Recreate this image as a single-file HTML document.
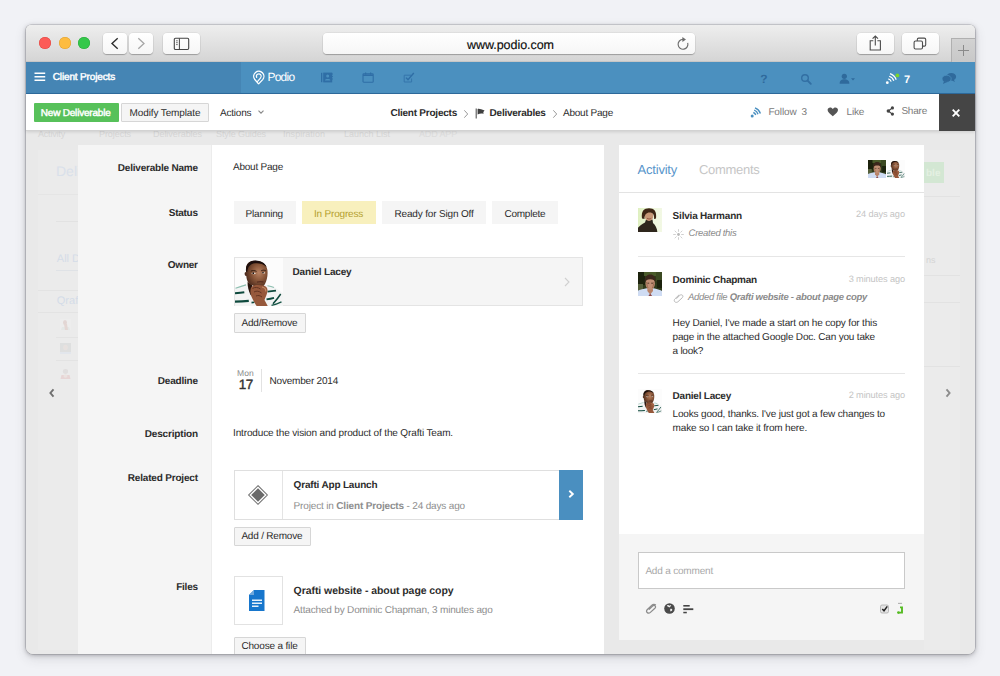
<!DOCTYPE html>
<html lang="en">
<head>
<meta charset="utf-8">
<title>Podio - About Page</title>
<style>
*{box-sizing:border-box;margin:0;padding:0}
html,body{width:1000px;height:676px;overflow:hidden}
body{background:#f1f2f6;font-family:"Liberation Sans",Arial,Helvetica,sans-serif;font-size:10px;color:#333;position:relative;text-rendering:geometricPrecision}
.a{position:absolute}
.t{position:absolute;white-space:nowrap;line-height:1}
#win{left:26px;top:25px;width:949px;height:629px;border-radius:5px 5px 7px 7px;background:#e9e9e9;box-shadow:0 0 0 .6px rgba(40,40,48,.26),0 1px 4px rgba(52,52,62,.36),0 4px 12px rgba(52,52,62,.15);}
#clip{left:26px;top:25px;width:949px;height:629px;border-radius:5px 5px 7px 7px;overflow:hidden}
#clip > .in{position:absolute;left:-26px;top:-25px;width:1000px;height:676px}
#chrome{left:26px;top:25px;width:949px;height:37px;background:linear-gradient(#eeeeee,#d5d5d5);border-bottom:1px solid #c6c6c6}
.tl{width:12px;height:12px;border-radius:50%;top:37px}
.cb{background:linear-gradient(#ffffff,#f6f6f6);border-radius:4px;box-shadow:0 1px 1px rgba(0,0,0,.25),0 0 0 .5px rgba(0,0,0,.08);top:33px;height:21px}
#blue{left:26px;top:62px;width:949px;height:32px;background:#4b90bf;border-bottom:1px solid #2e6c9e}
#blueL{left:26px;top:62px;width:215px;height:31px;background:#4585b4}
#wbar{left:26px;top:94px;width:949px;height:37px;background:#fff;border-bottom:1px solid #d2d2d2;box-shadow:0 1px 3px rgba(0,0,0,.12)}
.btn{background:#f5f5f5;border:1px solid #d6d6d6;border-radius:1px}
.sbtn{background:#f5f5f5;top:201px;height:23px}
</style>
</head>
<body>
<div class="a" id="win"></div>
<div class="a" id="clip"><div class="in">

<!-- page behind overlay (faint) -->
<div class="a" style="left:26px;top:131px;width:949px;height:523px;background:#e9e9e9"></div>
<div class="a" style="left:38px;top:150px;width:40px;height:500px;background:#ebebeb"></div>
<div class="a" style="left:38px;top:194px;width:40px;height:1px;background:#e5e5e5"></div>
<div class="a" style="left:56px;top:221px;width:22px;height:1px;background:#e2e2e2"></div>
<div class="a" style="left:56px;top:270px;width:22px;height:1px;background:#dfe2e6"></div>
<div class="a" style="left:38px;top:290px;width:40px;height:1px;background:#e3e3e3"></div>
<div class="a" style="left:38px;top:312px;width:40px;height:1px;background:#e3e3e3"></div>
<div class="a" style="left:56px;top:337px;width:22px;height:1px;background:#e3e3e3"></div>
<div class="a" style="left:56px;top:360px;width:22px;height:1px;background:#e3e3e3"></div>
<svg class="a" style="left:59px;top:318px;opacity:.55" width="13" height="13" viewBox="0 0 13 13"><defs><filter id="fb1"><feGaussianBlur stdDeviation=".7"/></filter></defs><g filter="url(#fb1)"><rect x="1" y="1" width="11" height="11" fill="#efefef"/><ellipse cx="6" cy="4.500" rx="2" ry="2.600" fill="#dcc6c2"/><path d="M2 12 L3 9 L10 9 L11 12Z" fill="#dfe6e4"/><path d="M5 6 L8 6 L9 12 L6 12Z" fill="#e0c8c2"/></g></svg>
<svg class="a" style="left:59px;top:342px;opacity:.6" width="13" height="13" viewBox="0 0 13 13"><g filter="url(#fb1)"><rect x="1" y="1" width="11" height="11" fill="#d6d8d8"/><ellipse cx="6.500" cy="5.500" rx="2.300" ry="2.800" fill="#e6dcd8"/><path d="M1 12 L1 10 L12 10 L12 12Z" fill="#dde3ee"/></g></svg>
<svg class="a" style="left:59px;top:367px;opacity:.55" width="13" height="13" viewBox="0 0 13 13"><g filter="url(#fb1)"><rect x="1" y="1" width="11" height="11" fill="#ececec"/><ellipse cx="6.500" cy="4.500" rx="2.600" ry="2.400" fill="#d8d4d4"/><path d="M1.500 12 L2.500 8 L10.500 8 L11.500 12Z" fill="#e4c4c4"/><ellipse cx="6.500" cy="9" rx="2" ry="1.800" fill="#eadcd8"/></g></svg>
<div class="a" style="left:924px;top:150px;width:36px;height:500px;background:#ebebeb"></div>
<div class="a" style="left:924px;top:162px;width:20px;height:21px;background:#d3e7d3"></div>
<div class="a" style="left:924px;top:196px;width:36px;height:1px;background:#e2e2e2"></div>
<div class="a" style="left:924px;top:275px;width:36px;height:1px;background:#e2e2e2"></div>
<div class="a" style="left:924px;top:302px;width:36px;height:1px;background:#e2e2e2"></div>
<div class="a" style="left:924px;top:366px;width:36px;height:1px;background:#e2e2e2"></div>
<div class="t" id="f1" style="left:38.0px;top:130.00px;font-size:9px;color:#d6d6d6;letter-spacing:-0.189px">Activity</div>
<div class="t" id="f2" style="left:99.0px;top:130.00px;font-size:9px;color:#d6d6d6;letter-spacing:-0.064px">Projects</div>
<div class="t" id="f3" style="left:153.0px;top:130.00px;font-size:9px;color:#d6d6d6;letter-spacing:-0.044px">Deliverables</div>
<div class="t" id="f4" style="left:216.0px;top:130.00px;font-size:9px;color:#d6d6d6;letter-spacing:-0.086px">Style Guides</div>
<div class="t" id="f5" style="left:283.0px;top:130.00px;font-size:9px;color:#d6d6d6;letter-spacing:0.043px">Inspiration</div>
<div class="t" id="f6" style="left:344.0px;top:130.00px;font-size:9px;color:#d6d6d6;letter-spacing:-0.004px">Launch List</div>
<div class="t" id="f7" style="left:419.0px;top:130.00px;font-size:9px;color:#dcdcdc;letter-spacing:-0.145px">ADD APP</div>
<div class="t" id="fd" style="left:56.0px;top:164.00px;font-size:14px;color:#d9e0ea">Deli</div>
<div class="t" id="fa" style="left:56.8px;top:254.00px;font-size:11px;color:#d4dce8">All De</div>
<div class="t" id="fq" style="left:56.8px;top:296.00px;font-size:11px;color:#d4dce8">Qraft</div>
<div class="t" id="fb" style="left:926.0px;top:169.00px;font-size:10px;color:#e4f0e2;font-weight:bold">ble</div>
<div class="t" id="fns" style="left:926.0px;top:256.00px;font-size:9px;color:#d4d4d4">ns</div>
<!-- side chevrons -->
<svg class="a" style="left:47px;top:386px" width="10" height="14" viewBox="0 0 10 14"><path d="M6.500 3.400 L3.400 7 L6.500 10.600" fill="none" stroke="#707070" stroke-width="1.900"/></svg>
<svg class="a" style="left:943px;top:386px" width="10" height="14" viewBox="0 0 10 14"><path d="M3.500 3.400 L6.600 7 L3.500 10.600" fill="none" stroke="#8c8c8c" stroke-width="1.900"/></svg>

<!-- main modal -->
<div class="a" style="left:78px;top:145px;width:134px;height:520px;background:#f5f5f5;border-right:1px solid #ececec"></div>
<div class="a" style="left:212px;top:145px;width:392px;height:520px;background:#fff"></div>

<!-- status buttons -->
<div class="a sbtn" style="left:234px;width:62px"></div>
<div class="a sbtn" style="left:302px;width:74px;background:#f8f0bd"></div>
<div class="a sbtn" style="left:382px;width:104px"></div>
<div class="a sbtn" style="left:492px;width:66px"></div>

<!-- owner -->
<div class="a" style="left:234px;top:257px;width:349px;height:49px;background:#f5f5f5;border:1px solid #e4e4e4"></div>
<svg class="a" style="left:234.5px;top:257.5px" width="48" height="48" viewBox="0 0 48 48">
<defs><filter id="bld3" x="-10%" y="-10%" width="120%" height="120%"><feGaussianBlur stdDeviation="0.55"/></filter>
<radialGradient id="fgd3" cx="0.62" cy="0.45" r="0.65"><stop offset="0" stop-color="#b98363"/><stop offset="0.45" stop-color="#8a573a"/><stop offset="1" stop-color="#402216"/></radialGradient>
<clipPath id="avcd3"><rect width="48" height="48"/></clipPath></defs>
<rect width="48" height="48" fill="#fcfcfc"/>
<g filter="url(#bld3)" clip-path="url(#avcd3)">
<path d="M-1 31 C4 28 9 26.500 14 26 L33 27 C38 28 43 31 49 36 L49 49 L-1 49Z" fill="#f3f4f4"/>
<path d="M.500 30.300 C4 29 7.500 27.800 11 26.900" stroke="#8dbfb0" stroke-width="1.100" fill="none"/>
<path d="M0 35.300 C3 35 6 34.700 9.300 34.300" stroke="#0f4a3d" stroke-width="2.100" fill="none"/>
<path d="M0 43.600 C5 43.500 9 43.300 13.800 42.900" stroke="#0f4a3d" stroke-width="2.300" fill="none"/>
<path d="M16.500 44.600 L19.500 44.200" stroke="#0f4a3d" stroke-width="1.600" fill="none"/>
<path d="M32.500 27.800 C35 28.200 37 28.700 39 29.500" stroke="#8dbfb0" stroke-width="1.100" fill="none"/>
<path d="M32.500 33.600 C35.500 33.300 38 33 41 32.600" stroke="#0f4a3d" stroke-width="1.900" fill="none"/>
<path d="M31.500 41.400 C34 41 36.500 40.500 39 39.800" stroke="#0f4a3d" stroke-width="1.900" fill="none"/>
<path d="M38 45.800 C41 42.500 43.500 39.500 45.700 36" stroke="#0f4a3d" stroke-width="1.500" fill="none"/>
<path d="M36.500 47.300 C40 46.500 43.500 45.300 46.500 43.800" stroke="#175546" stroke-width="1.300" fill="none"/>
<path d="M12.500 24 L17 27 L17.500 38 L15.500 37 C13.500 33 12.500 28 12.500 24Z" fill="#2a1710"/>
<path d="M11 12 C10.500 5 15 2.600 20.500 2.700 C26 2.800 31.500 5.500 32.400 12 C33 17 32 22 30 26 C28.500 28.500 27 29.500 25 29.300 C21 29 16 27.500 13.500 25 C12 23 11.500 20 11.300 18 C9.500 18.500 8.800 14 11 14Z" fill="url(#fgd3)"/>
<path d="M11 13.500 C10.300 6 15 2.300 20.500 2.400 C25.500 2.500 30 4.500 31.600 9 C28.500 5.800 24 5 20 5.300 C15.500 5.700 12.800 8.500 12.300 13.800Z" fill="#1a0f0b"/>
<path d="M16.300 15.300 C17.500 14.300 19.800 14.300 21 15.600 C19.500 16.600 17.500 16.500 16.300 15.300Z" fill="#efe6dc"/>
<path d="M26.600 14.600 C27.600 13.800 29.500 13.900 30.300 14.900 C29.200 15.800 27.600 15.700 26.600 14.600Z" fill="#efe6dc"/>
<circle cx="18.300" cy="15.200" r=".9" fill="#1a0f0b"/><circle cx="28" cy="14.600" r=".8" fill="#1a0f0b"/>
<path d="M15.800 13.200 C17.500 12.300 19.800 12.400 21.500 13.400 M26.200 12.800 C27.500 12 29.500 12 30.800 12.800" stroke="#2a1710" stroke-width=".9" fill="none"/>
<path d="M22 24.200 C24 23.500 26.500 23.500 28.500 24" stroke="#5a2f22" stroke-width="1.300" fill="none"/>
<path d="M16.500 29 C19 26.500 24 26.800 28 27.500 C31 28 32.800 30 32.500 33 C32 37 30 40 29.500 42 L33 48.500 L22 48.500 C19 44 16 39 15.500 35 C15.300 32.500 15.500 30.500 16.500 29Z" fill="#96583a"/>
<path d="M17.500 30.500 C20 28.800 23 29.300 25.500 31 M19 34 C21.500 32.500 24 33 26.500 35 M21 38 C23 37 25 37.500 27 39" stroke="#5e3020" stroke-width=".9" fill="none"/>
<path d="M27 29 C29.500 29.500 31 31 30.800 33.500" stroke="#c48a68" stroke-width="1.200" fill="none"/>
</g>
</svg>
<svg class="a" style="left:563px;top:276px" width="8" height="12" viewBox="0 0 8 12"><path d="M2 2 L6 6 L2 10" fill="none" stroke="#d0d0d0" stroke-width="1.100"/></svg>
<div class="a btn" style="left:234px;top:313px;width:72px;height:20px"></div>

<!-- deadline divider -->
<div class="a" style="left:261px;top:369px;width:1px;height:23px;background:#e2e2e2"></div>

<!-- related project -->
<div class="a" style="left:234px;top:470px;width:349px;height:50px;background:#fff;border:1px solid #dfdfdf"></div>
<div class="a" style="left:282px;top:471px;width:1px;height:48px;background:#e4e4e4"></div>
<svg class="a" style="left:247px;top:484px" width="22" height="22" viewBox="0 0 24 24"><path d="M12 1.800 L22.200 12 L12 22.200 L1.800 12Z" fill="#fff" stroke="#6a6a6a" stroke-width="1.100"/><path d="M12 4.600 L19.400 12 L12 19.400 L4.600 12Z" fill="#6a6a6a"/></svg>
<div class="a" style="left:559px;top:470px;width:24px;height:50px;background:#4a8fc0"></div>
<svg class="a" style="left:565.5px;top:488px" width="10" height="12" viewBox="0 0 10 12"><path d="M3.300 2.800 L6.800 6 L3.300 9.200" fill="none" stroke="#fff" stroke-width="1.900"/></svg>
<div class="a btn" style="left:234px;top:527px;width:77px;height:19px"></div>

<!-- files -->
<div class="a" style="left:234px;top:576px;width:49px;height:49px;background:#fff;border:1px solid #e2e2e2"></div>
<svg class="a" style="left:249px;top:590px" width="16" height="21" viewBox="0 0 16 21"><path d="M5 0 H15.500 V21 H0 V5Z" fill="#1776cc"/><path d="M0 5 L5 0 V5Z" fill="#6fa8dc"/><rect x="3" y="9.500" width="10" height="1.500" fill="#e8f1fa"/><rect x="3" y="12.500" width="10" height="1.500" fill="#e8f1fa"/><rect x="3" y="15.500" width="6.500" height="1.500" fill="#e8f1fa"/></svg>
<div class="a btn" style="left:234px;top:637px;width:72px;height:22px"></div>

<!-- right panel -->
<div class="a" style="left:619px;top:145px;width:305px;height:389px;background:#fff"></div>
<div class="a" style="left:619px;top:534px;width:305px;height:106px;background:#f5f5f5"></div>
<div class="a" style="left:619px;top:192px;width:305px;height:1px;background:#e3e3e3"></div>
<div class="a" style="left:638px;top:256px;width:267px;height:1px;background:#e6e6e6"></div>
<div class="a" style="left:638px;top:373px;width:267px;height:1px;background:#e6e6e6"></div>
<div class="a" style="left:638px;top:552px;width:267px;height:37px;background:#fff;border:1px solid #c9c9c9"></div>
<svg class="a" style="left:638px;top:207.5px" width="24" height="24" viewBox="0 0 24 24">
<defs><filter id="bsil" x="-10%" y="-10%" width="120%" height="120%"><feGaussianBlur stdDeviation="0.5"/></filter><clipPath id="csil"><rect width="24" height="24"/></clipPath>
<linearGradient id="gsil" x1="0" x2="1"><stop offset="0" stop-color="#dff0c0"/><stop offset=".6" stop-color="#eef6dc"/><stop offset="1" stop-color="#f2f8e4"/></linearGradient></defs>
<rect width="24" height="24" fill="url(#gsil)"/>
<g filter="url(#bsil)" clip-path="url(#csil)">
<path d="M-1 25 L-1 21 C1 18 4 16 7 14.500 L8 11.500 L14.500 11.500 L15 15 C17.500 17 19 20 19.500 25Z" fill="#2d281f"/>
<ellipse cx="11" cy="8" rx="4.300" ry="5" fill="#c69777"/>
<path d="M4 10.500 C3 3 6 .2 11 .2 C16 .2 19 3 18 10.500 L16 11 C16.500 7 15 4.500 11.500 4.600 C8.500 4.700 6.500 6.500 6.500 11Z" fill="#3d2817"/>
<path d="M9 10.200 C10.300 11.200 12 11.200 13.300 10.200" stroke="#8a4a3a" stroke-width=".8" fill="none"/>
</g></svg><svg class="a" style="left:638px;top:272px" width="24" height="24" viewBox="0 0 24 24">
<defs><filter id="bm638_272" x="-10%" y="-10%" width="120%" height="120%"><feGaussianBlur stdDeviation="0.5"/></filter><clipPath id="cm638_272"><rect width="24" height="24"/></clipPath></defs>
<rect width="24" height="24" fill="#2f3a1a"/>
<g filter="url(#bm638_272)" clip-path="url(#cm638_272)">
<rect x="-1" y="-1" width="8" height="14" fill="#1c2410"/><rect x="6" y="-1" width="12" height="5" fill="#4a5a2c"/><rect x="18" y="-1" width="7" height="10" fill="#3b4a20"/><rect x="19" y="8" width="6" height="8" fill="#1a200e"/><rect x="-1" y="12" width="6" height="6" fill="#55603a"/>
<path d="M-1 25 L-1 19 C2 17.300 6 17 8.500 16.300 L15.500 16.300 C18.500 17 22 17.800 25 19.500 L25 25Z" fill="#cfdcf3"/>
<path d="M9.500 15 L14.800 15 L15 19 L12.200 22.500 L9.300 19Z" fill="#b9846a"/>
<path d="M10 24.500 L12.200 21.500 L14.500 24.500Z" fill="#8c4a4a"/>
<ellipse cx="12.200" cy="11.500" rx="4.700" ry="6.300" fill="#c08f74"/>
<path d="M8.600 10 C8.800 12 9 14 10 16 M15.800 10 C15.600 12 15.400 14 14.400 16" stroke="#9c6a52" stroke-width="1" fill="none"/>
<path d="M6.800 10.500 C6.200 5 9 2.600 12.200 2.600 C15.500 2.600 18.200 5 17.500 10.500 C16.800 8 15 7.200 12.200 7.200 C9.500 7.200 7.800 8 6.800 10.500Z" fill="#3a271b"/>
<path d="M9.500 11.200 H11.200 M13.200 11.200 H15" stroke="#3a271b" stroke-width=".8"/>
</g></svg><svg class="a" style="left:638px;top:389px" width="24" height="24" viewBox="0 0 48 48">
<defs><filter id="bld1" x="-10%" y="-10%" width="120%" height="120%"><feGaussianBlur stdDeviation="0.9"/></filter>
<radialGradient id="fgd1" cx="0.62" cy="0.45" r="0.65"><stop offset="0" stop-color="#b98363"/><stop offset="0.45" stop-color="#8a573a"/><stop offset="1" stop-color="#402216"/></radialGradient>
<clipPath id="avcd1"><rect width="48" height="48"/></clipPath></defs>
<rect width="48" height="48" fill="#fcfcfc"/>
<g filter="url(#bld1)" clip-path="url(#avcd1)">
<path d="M-1 31 C4 28 9 26.500 14 26 L33 27 C38 28 43 31 49 36 L49 49 L-1 49Z" fill="#f3f4f4"/>
<path d="M.500 30.300 C4 29 7.500 27.800 11 26.900" stroke="#8dbfb0" stroke-width="1.100" fill="none"/>
<path d="M0 35.300 C3 35 6 34.700 9.300 34.300" stroke="#0f4a3d" stroke-width="2.100" fill="none"/>
<path d="M0 43.600 C5 43.500 9 43.300 13.800 42.900" stroke="#0f4a3d" stroke-width="2.300" fill="none"/>
<path d="M16.500 44.600 L19.500 44.200" stroke="#0f4a3d" stroke-width="1.600" fill="none"/>
<path d="M32.500 27.800 C35 28.200 37 28.700 39 29.500" stroke="#8dbfb0" stroke-width="1.100" fill="none"/>
<path d="M32.500 33.600 C35.500 33.300 38 33 41 32.600" stroke="#0f4a3d" stroke-width="1.900" fill="none"/>
<path d="M31.500 41.400 C34 41 36.500 40.500 39 39.800" stroke="#0f4a3d" stroke-width="1.900" fill="none"/>
<path d="M38 45.800 C41 42.500 43.500 39.500 45.700 36" stroke="#0f4a3d" stroke-width="1.500" fill="none"/>
<path d="M36.500 47.300 C40 46.500 43.500 45.300 46.500 43.800" stroke="#175546" stroke-width="1.300" fill="none"/>
<path d="M12.500 24 L17 27 L17.500 38 L15.500 37 C13.500 33 12.500 28 12.500 24Z" fill="#2a1710"/>
<path d="M11 12 C10.500 5 15 2.600 20.500 2.700 C26 2.800 31.500 5.500 32.400 12 C33 17 32 22 30 26 C28.500 28.500 27 29.500 25 29.300 C21 29 16 27.500 13.500 25 C12 23 11.500 20 11.300 18 C9.500 18.500 8.800 14 11 14Z" fill="url(#fgd1)"/>
<path d="M11 13.500 C10.300 6 15 2.300 20.500 2.400 C25.500 2.500 30 4.500 31.600 9 C28.500 5.800 24 5 20 5.300 C15.500 5.700 12.800 8.500 12.300 13.800Z" fill="#1a0f0b"/>
<path d="M16.300 15.300 C17.500 14.300 19.800 14.300 21 15.600 C19.500 16.600 17.500 16.500 16.300 15.300Z" fill="#efe6dc"/>
<path d="M26.600 14.600 C27.600 13.800 29.500 13.900 30.300 14.900 C29.200 15.800 27.600 15.700 26.600 14.600Z" fill="#efe6dc"/>
<circle cx="18.300" cy="15.200" r=".9" fill="#1a0f0b"/><circle cx="28" cy="14.600" r=".8" fill="#1a0f0b"/>
<path d="M15.800 13.200 C17.500 12.300 19.800 12.400 21.500 13.400 M26.200 12.800 C27.500 12 29.500 12 30.800 12.800" stroke="#2a1710" stroke-width=".9" fill="none"/>
<path d="M22 24.200 C24 23.500 26.500 23.500 28.500 24" stroke="#5a2f22" stroke-width="1.300" fill="none"/>
<path d="M16.500 29 C19 26.500 24 26.800 28 27.500 C31 28 32.800 30 32.500 33 C32 37 30 40 29.500 42 L33 48.500 L22 48.500 C19 44 16 39 15.500 35 C15.300 32.500 15.500 30.500 16.500 29Z" fill="#96583a"/>
<path d="M17.500 30.500 C20 28.800 23 29.300 25.500 31 M19 34 C21.500 32.500 24 33 26.500 35 M21 38 C23 37 25 37.500 27 39" stroke="#5e3020" stroke-width=".9" fill="none"/>
<path d="M27 29 C29.500 29.500 31 31 30.800 33.500" stroke="#c48a68" stroke-width="1.200" fill="none"/>
</g>
</svg><svg class="a" style="left:868px;top:160px" width="18" height="18" viewBox="0 0 24 24">
<defs><filter id="bm868_160" x="-10%" y="-10%" width="120%" height="120%"><feGaussianBlur stdDeviation="0.5"/></filter><clipPath id="cm868_160"><rect width="24" height="24"/></clipPath></defs>
<rect width="24" height="24" fill="#2f3a1a"/>
<g filter="url(#bm868_160)" clip-path="url(#cm868_160)">
<rect x="-1" y="-1" width="8" height="14" fill="#1c2410"/><rect x="6" y="-1" width="12" height="5" fill="#4a5a2c"/><rect x="18" y="-1" width="7" height="10" fill="#3b4a20"/><rect x="19" y="8" width="6" height="8" fill="#1a200e"/><rect x="-1" y="12" width="6" height="6" fill="#55603a"/>
<path d="M-1 25 L-1 19 C2 17.300 6 17 8.500 16.300 L15.500 16.300 C18.500 17 22 17.800 25 19.500 L25 25Z" fill="#cfdcf3"/>
<path d="M9.500 15 L14.800 15 L15 19 L12.200 22.500 L9.300 19Z" fill="#b9846a"/>
<path d="M10 24.500 L12.200 21.500 L14.500 24.500Z" fill="#8c4a4a"/>
<ellipse cx="12.200" cy="11.500" rx="4.700" ry="6.300" fill="#c08f74"/>
<path d="M8.600 10 C8.800 12 9 14 10 16 M15.800 10 C15.600 12 15.400 14 14.400 16" stroke="#9c6a52" stroke-width="1" fill="none"/>
<path d="M6.800 10.500 C6.200 5 9 2.600 12.200 2.600 C15.500 2.600 18.200 5 17.500 10.500 C16.800 8 15 7.200 12.200 7.200 C9.500 7.200 7.800 8 6.800 10.500Z" fill="#3a271b"/>
<path d="M9.500 11.200 H11.200 M13.200 11.200 H15" stroke="#3a271b" stroke-width=".8"/>
</g></svg><svg class="a" style="left:887px;top:160px" width="18" height="18" viewBox="0 0 48 48">
<defs><filter id="bld2" x="-10%" y="-10%" width="120%" height="120%"><feGaussianBlur stdDeviation="1.1"/></filter>
<radialGradient id="fgd2" cx="0.62" cy="0.45" r="0.65"><stop offset="0" stop-color="#b98363"/><stop offset="0.45" stop-color="#8a573a"/><stop offset="1" stop-color="#402216"/></radialGradient>
<clipPath id="avcd2"><rect width="48" height="48"/></clipPath></defs>
<rect width="48" height="48" fill="#fcfcfc"/>
<g filter="url(#bld2)" clip-path="url(#avcd2)">
<path d="M-1 31 C4 28 9 26.500 14 26 L33 27 C38 28 43 31 49 36 L49 49 L-1 49Z" fill="#f3f4f4"/>
<path d="M.500 30.300 C4 29 7.500 27.800 11 26.900" stroke="#8dbfb0" stroke-width="1.100" fill="none"/>
<path d="M0 35.300 C3 35 6 34.700 9.300 34.300" stroke="#0f4a3d" stroke-width="2.100" fill="none"/>
<path d="M0 43.600 C5 43.500 9 43.300 13.800 42.900" stroke="#0f4a3d" stroke-width="2.300" fill="none"/>
<path d="M16.500 44.600 L19.500 44.200" stroke="#0f4a3d" stroke-width="1.600" fill="none"/>
<path d="M32.500 27.800 C35 28.200 37 28.700 39 29.500" stroke="#8dbfb0" stroke-width="1.100" fill="none"/>
<path d="M32.500 33.600 C35.500 33.300 38 33 41 32.600" stroke="#0f4a3d" stroke-width="1.900" fill="none"/>
<path d="M31.500 41.400 C34 41 36.500 40.500 39 39.800" stroke="#0f4a3d" stroke-width="1.900" fill="none"/>
<path d="M38 45.800 C41 42.500 43.500 39.500 45.700 36" stroke="#0f4a3d" stroke-width="1.500" fill="none"/>
<path d="M36.500 47.300 C40 46.500 43.500 45.300 46.500 43.800" stroke="#175546" stroke-width="1.300" fill="none"/>
<path d="M12.500 24 L17 27 L17.500 38 L15.500 37 C13.500 33 12.500 28 12.500 24Z" fill="#2a1710"/>
<path d="M11 12 C10.500 5 15 2.600 20.500 2.700 C26 2.800 31.500 5.500 32.400 12 C33 17 32 22 30 26 C28.500 28.500 27 29.500 25 29.300 C21 29 16 27.500 13.500 25 C12 23 11.500 20 11.300 18 C9.500 18.500 8.800 14 11 14Z" fill="url(#fgd2)"/>
<path d="M11 13.500 C10.300 6 15 2.300 20.500 2.400 C25.500 2.500 30 4.500 31.600 9 C28.500 5.800 24 5 20 5.300 C15.500 5.700 12.800 8.500 12.300 13.800Z" fill="#1a0f0b"/>
<path d="M16.300 15.300 C17.500 14.300 19.800 14.300 21 15.600 C19.500 16.600 17.500 16.500 16.300 15.300Z" fill="#efe6dc"/>
<path d="M26.600 14.600 C27.600 13.800 29.500 13.900 30.300 14.900 C29.200 15.800 27.600 15.700 26.600 14.600Z" fill="#efe6dc"/>
<circle cx="18.300" cy="15.200" r=".9" fill="#1a0f0b"/><circle cx="28" cy="14.600" r=".8" fill="#1a0f0b"/>
<path d="M15.800 13.200 C17.500 12.300 19.800 12.400 21.500 13.400 M26.200 12.800 C27.500 12 29.500 12 30.800 12.800" stroke="#2a1710" stroke-width=".9" fill="none"/>
<path d="M22 24.200 C24 23.500 26.500 23.500 28.500 24" stroke="#5a2f22" stroke-width="1.300" fill="none"/>
<path d="M16.500 29 C19 26.500 24 26.800 28 27.500 C31 28 32.800 30 32.500 33 C32 37 30 40 29.500 42 L33 48.500 L22 48.500 C19 44 16 39 15.500 35 C15.300 32.500 15.500 30.500 16.500 29Z" fill="#96583a"/>
<path d="M17.500 30.500 C20 28.800 23 29.300 25.500 31 M19 34 C21.500 32.500 24 33 26.500 35 M21 38 C23 37 25 37.500 27 39" stroke="#5e3020" stroke-width=".9" fill="none"/>
<path d="M27 29 C29.500 29.500 31 31 30.800 33.500" stroke="#c48a68" stroke-width="1.200" fill="none"/>
</g>
</svg>

<!-- created-this sun -->
<svg class="a" style="left:673px;top:229px" width="11" height="11" viewBox="0 0 11 11"><circle cx="5.500" cy="5.500" r="1.400" fill="#b8b8b8"/><g stroke="#c4c4c4" stroke-width=".8" stroke-linecap="round"><path d="M5.500 .6V2.400M5.500 8.600V10.400M.6 5.500H2.400M8.600 5.500H10.400M2 2L3.300 3.300M7.700 7.700L9 9M9 2L7.700 3.300M3.300 7.700L2 9"/></g></svg>
<!-- paperclip small -->
<svg class="a" style="left:673px;top:293px" width="11" height="10" viewBox="0 0 11 10"><path d="M3.300 5.800 L6.800 2.400 C7.600 1.600 8.900 1.600 9.500 2.300 C10.100 3 10 4 9.300 4.700 L5 8.700 C4 9.600 2.600 9.600 1.800 8.800 C1 8 1.100 6.700 2 5.800 L6.200 1.700" fill="none" stroke="#b9b9b9" stroke-width="1"/></svg>
<!-- bottom paperclip -->
<svg class="a" style="left:645px;top:603px" width="12" height="11" viewBox="0 0 12 11"><path d="M4 6.600 L7.600 3.100 C8.400 2.300 9.500 2.300 10.100 2.900 C10.700 3.600 10.600 4.500 9.900 5.200 L5.400 9.400 C4.400 10.300 3 10.300 2.200 9.500 C1.400 8.700 1.500 7.400 2.400 6.500 L6.900 2.100 C7.900 1.200 9.800 1 10.800 2.200" fill="none" stroke="#8c8c8c" stroke-width="1.250"/></svg>
<!-- globe -->
<svg class="a" style="left:664px;top:603px" width="11" height="11" viewBox="0 0 11 11"><circle cx="5.500" cy="5.500" r="5.300" fill="#4a4a4a"/><path d="M3.200 2.200 C4 1.600 5 2 5.200 2.800 C5.800 2.300 6.800 2 7.200 2.600 C7 3.600 6 3.800 5.500 4.600 C4.800 4.400 4.500 3.600 3.800 3.600 C3.200 3.400 3 2.800 3.200 2.200Z M6.300 5.900 C7.200 5.600 8.200 6.100 8.400 6.900 C8 7.800 7.300 8.400 6.600 8.600 C6.300 7.800 6 6.800 6.300 5.900Z" fill="#f4f4f4"/></svg>
<!-- bars -->
<svg class="a" style="left:683px;top:603.5px" width="11" height="11" viewBox="0 0 11 11"><rect x=".3" y="1" width="6.400" height="1.600" fill="#444"/><rect x=".3" y="4.300" width="10" height="1.800" fill="#444"/><rect x=".3" y="7.800" width="3.500" height="1.500" fill="#444"/></svg>
<!-- checkbox -->
<svg class="a" style="left:880px;top:604px" width="9" height="10" viewBox="0 0 9 10"><rect x=".5" y="1" width="8" height="8" rx="1.600" fill="#e4e4e4" stroke="#ababab" stroke-width=".8"/><path d="M2.300 5 L4 6.800 L7.300 2.400" fill="none" stroke="#222" stroke-width="1.500"/></svg>
<!-- green return -->
<svg class="a" style="left:896px;top:602px" width="8" height="13" viewBox="0 0 8 13"><rect x="2" y=".9" width="4" height=".7" fill="#8a8a8a"/><path d="M4 5.400 H6 V10.600 H2.600" fill="none" stroke="#55bb22" stroke-width="1.900"/><circle cx="2.400" cy="10.600" r="1.300" fill="#55bb22"/></svg>

</div></div>

<!-- browser chrome -->
<div class="a" id="chrome" style="border-radius:5px 5px 0 0"></div>
<div class="a tl" style="left:39px;background:#fc5b57;box-shadow:inset 0 0 0 .5px #de4640"></div>
<div class="a tl" style="left:58.5px;background:#fdbc40;box-shadow:inset 0 0 0 .5px #dea032"></div>
<div class="a tl" style="left:78px;background:#34c84a;box-shadow:inset 0 0 0 .5px #27a83a"></div>
<div class="a cb" style="left:103px;width:24px"></div>
<div class="a cb" style="left:129px;width:24px"></div>
<div class="a cb" style="left:163px;width:37px"></div>
<div class="a cb" style="left:323px;width:372px"></div>
<div class="a cb" style="left:857px;width:37px"></div>
<div class="a cb" style="left:902px;width:37px"></div>
<div class="a" style="left:951px;top:38px;width:24px;height:24px;background:linear-gradient(#d2d2d2,#c8c8c8);border:1px solid #b0b0b0;border-bottom:none;border-right:none"></div>

<svg class="a" style="left:109px;top:37px" width="12" height="13" viewBox="0 0 12 13"><path d="M8.700 1.200 L3 6.500 L8.700 11.800" fill="none" stroke="#2e2e2e" stroke-width="1.400"/></svg>
<svg class="a" style="left:135px;top:37px" width="12" height="13" viewBox="0 0 12 13"><path d="M3.300 1.200 L9 6.500 L3.300 11.800" fill="none" stroke="#a6a6a6" stroke-width="1.300"/></svg>
<svg class="a" style="left:173px;top:37px" width="17" height="14" viewBox="0 0 17 14"><rect x="1.300" y="1.300" width="14.400" height="11.200" rx="1.200" fill="none" stroke="#444" stroke-width="1.100"/><path d="M6.400 1.300 V12.500" stroke="#444" stroke-width="1"/><path d="M3 3.800 H4.800 M3 5.700 H4.800 M3 7.600 H4.800" stroke="#555" stroke-width=".8"/></svg>
<svg class="a" style="left:676px;top:36px" width="14" height="15" viewBox="0 0 14 15"><path d="M7 3.400 A4.900 4.900 0 1 0 11.700 6.900" fill="none" stroke="#6e6e6e" stroke-width="1.150"/><path d="M6.400 1 L10 3.500 L6.400 5.900Z" fill="#6e6e6e"/></svg>
<svg class="a" style="left:869px;top:35px" width="13" height="16" viewBox="0 0 13 16"><path d="M4.300 5.800 H1.200 V15 H11.400 V5.800 H8.400" fill="none" stroke="#4c4c4c" stroke-width="1.100"/><path d="M6.300 10.500 V1.300 M3.600 3.700 L6.300 1 L9 3.700" fill="none" stroke="#4c4c4c" stroke-width="1.100"/></svg>
<svg class="a" style="left:913px;top:37px" width="14" height="13" viewBox="0 0 14 13"><rect x="4.300" y="1.100" width="8.400" height="8" rx="1.400" fill="none" stroke="#4c4c4c" stroke-width="1.100"/><rect x="1.100" y="4" width="8.400" height="8" rx="1.400" fill="#fbfbfb" stroke="#4c4c4c" stroke-width="1.100"/></svg>
<svg class="a" style="left:957px;top:44px" width="13" height="13" viewBox="0 0 13 13"><path d="M6.500 1 V12 M1 6.500 H12" stroke="#8a8a8a" stroke-width="1"/></svg>


<!-- blue bar -->
<div class="a" id="blue"></div>
<div class="a" id="blueL"></div>
<!-- white bar -->
<div class="a" id="wbar"></div>
<div class="a" style="left:34px;top:103px;width:85px;height:19px;background:#57c15a;border-radius:1px"></div>
<div class="a btn" style="left:121px;top:103px;width:88px;height:19px"></div>
<div class="a" style="left:938.5px;top:94px;width:36.5px;height:37px;background:#454545"></div>

<!-- hamburger -->
<svg class="a" style="left:34px;top:72px" width="12" height="10" viewBox="0 0 12 10"><path d="M.5 1.250 H11.200 M.5 4.750 H11.200 M.5 8.300 H11.200" stroke="#fff" stroke-width="1.500"/></svg>
<!-- podio logo -->
<svg class="a" style="left:252px;top:69.5px" width="14" height="15" viewBox="0 0 14 15"><path d="M6.300 13.700 L2.620 9.230 A5.100 5.100 0 1 1 10.700 9.580 L6.900 13.600" fill="none" stroke="#fff" stroke-width="1.300" stroke-linecap="round" stroke-linejoin="round"/><path d="M4.700 7.400 A2.400 2.400 0 1 1 8.600 7.900 L5.600 11.300" fill="none" stroke="#fff" stroke-width="1.200" stroke-linecap="round"/></svg>
<!-- contacts -->
<svg class="a" style="left:321px;top:72px" width="12" height="11" viewBox="0 0 12 11"><rect x="0" y=".8" width="1.300" height="9.400" fill="#2f6ea6"/><rect x="2.200" y=".6" width="9" height="9.800" fill="#2f6ea6"/><circle cx="6.700" cy="4" r="1.500" fill="#4b90bf"/><path d="M4 8.400 C4 6.500 9.400 6.500 9.400 8.400Z" fill="#4b90bf"/><path d="M11.200 2 H12 M11.200 4.500 H12 M11.200 7 H12" stroke="#2f6ea6" stroke-width="1"/></svg>
<!-- calendar -->
<svg class="a" style="left:362px;top:72px" width="12" height="11" viewBox="0 0 12 11"><rect x="1" y="1.800" width="10.200" height="8.400" rx=".8" fill="none" stroke="#2f6ea6" stroke-width="1.100"/><path d="M1 3.200 H11" stroke="#2f6ea6" stroke-width="1.600"/><path d="M3.600 .5 V2.600 M8.600 .5 V2.600" stroke="#2f6ea6" stroke-width="1.200"/></svg>
<!-- check -->
<svg class="a" style="left:403px;top:72px" width="12" height="11" viewBox="0 0 12 11"><path d="M8 3.200 H1.200 V10 H8.600 V6.500" fill="none" stroke="#3575ab" stroke-width="1"/><path d="M3 5.600 L5 7.800 L10.800 1" fill="none" stroke="#2f6ea6" stroke-width="1.400"/></svg>
<!-- search -->
<svg class="a" style="left:800px;top:73px" width="12" height="12" viewBox="0 0 12 12"><circle cx="5" cy="5" r="3.300" fill="none" stroke="#326fa3" stroke-width="1.400"/><path d="M7.500 7.500 L10.800 10.800" stroke="#326fa3" stroke-width="1.800" stroke-linecap="round"/></svg>
<!-- person -->
<svg class="a" style="left:839px;top:73px" width="17" height="12" viewBox="0 0 17 12"><circle cx="5.300" cy="3.300" r="2.600" fill="#2f6a9c"/><path d="M.6 10.700 C.6 7.500 3 6.300 5.300 6.300 C7.600 6.300 10.400 7.500 10.400 10.700Z" fill="#2f6a9c"/><path d="M12 5.200 H16 L14 7.400Z" fill="#2f6a9c"/></svg>
<!-- rss white -->
<svg class="a" style="left:885px;top:72px" width="15" height="13" viewBox="0 0 15 13"><circle cx="2.300" cy="10.700" r="1.400" fill="#fff"/><path d="M3.300 6.800 A4 4 0 0 1 6.200 9.700 M4.200 4.200 A7 7 0 0 1 8.800 8.800 M5 1.600 A10 10 0 0 1 11.200 7.800" fill="none" stroke="#fff" stroke-width="1.200"/><circle cx="12.400" cy="3.400" r="1.900" fill="#7bd52a"/></svg>
<!-- chat -->
<svg class="a" style="left:941px;top:72px" width="16" height="13" viewBox="0 0 16 13"><ellipse cx="10.300" cy="4.800" rx="4.800" ry="3.800" fill="#2f6a9c"/><path d="M12.500 7 L14 10 L10 8Z" fill="#2f6a9c"/><ellipse cx="5.600" cy="6.800" rx="4.600" ry="3.600" fill="#2f6a9c" stroke="#4b90bf" stroke-width=".8"/><path d="M3 9 L2 12 L6 10Z" fill="#2f6a9c"/></svg>
<!-- actions chevron -->
<svg class="a" style="left:257px;top:109px" width="8" height="6" viewBox="0 0 8 6"><path d="M1.500 1.600 L4 4.100 L6.500 1.600" fill="none" stroke="#8a8a8a" stroke-width="1.150"/></svg>
<!-- breadcrumb chevrons -->
<svg class="a" style="left:463px;top:109px" width="6" height="10" viewBox="0 0 6 10"><path d="M1.300 1.300 L4.700 5 L1.300 8.700" fill="none" stroke="#9a9a9a" stroke-width="1"/></svg>
<svg class="a" style="left:552px;top:109px" width="6" height="10" viewBox="0 0 6 10"><path d="M1.300 1.300 L4.700 5 L1.300 8.700" fill="none" stroke="#9a9a9a" stroke-width="1"/></svg>
<!-- flag -->
<svg class="a" style="left:475px;top:107.5px" width="10" height="11" viewBox="0 0 10 11"><path d="M1.200 .5 V10.500" stroke="#555" stroke-width="1.100"/><path d="M2.600 1 C4.500 .3 6 1.600 9.600 2.400 C8.500 3.500 8 4.300 8.600 6 C6.500 5.200 4.600 5.600 2.600 6.600Z" fill="#3f3f3f"/></svg>
<!-- follow rss -->
<svg class="a" style="left:749.500px;top:106.500px" width="12" height="11" viewBox="0 0 12 11"><circle cx="2.200" cy="9" r="1.500" fill="#4a8fc0"/><path d="M3.300 5.500 A3.600 3.600 0 0 1 5.700 8 M4.200 3.200 A6.200 6.200 0 0 1 8 7.200 M5 .9 A9 9 0 0 1 10.400 6.400" fill="none" stroke="#4a8fc0" stroke-width="1.400"/></svg>
<!-- heart -->
<svg class="a" style="left:827px;top:107px" width="12" height="10" viewBox="0 0 12 10"><path d="M5.800 9.300 C3 6.800 .6 5 .6 3 C.6 1.500 1.800 .5 3.200 .5 C4.300 .5 5.300 1.100 5.800 2 C6.300 1.100 7.300 .5 8.400 .5 C9.800 .5 11 1.500 11 3 C11 5 8.600 6.800 5.800 9.300Z" fill="#555"/></svg>
<!-- share -->
<svg class="a" style="left:885.5px;top:106.3px" width="9" height="10" viewBox="0 0 9 10"><path d="M6.300 1.900 L2.400 5 L6.300 8.100" fill="none" stroke="#444" stroke-width="1.200"/><circle cx="6.400" cy="1.900" r="1.600" fill="#444"/><circle cx="2.300" cy="5" r="1.700" fill="#444"/><circle cx="6.400" cy="8.100" r="1.600" fill="#444"/></svg>
<!-- close -->
<svg class="a" style="left:951px;top:108px" width="10" height="10" viewBox="0 0 10 10"><path d="M1.700 1.700 L8.300 8.300 M8.300 1.700 L1.700 8.300" stroke="#fff" stroke-width="1.900"/></svg>

<div class="t" id="url" style="left:467.0px;top:39.00px;font-size:12.5px;color:#0a0a0a;-webkit-text-stroke:.15px #0a0a0a;letter-spacing:-0.042px">www.podio.com</div>
<div class="t" id="cp" style="left:52.8px;top:73.00px;font-size:10px;color:#fff;-webkit-text-stroke:.45px #fff;letter-spacing:-0.151px">Client Projects</div>
<div class="t" id="podio" style="left:267.5px;top:71.00px;font-size:12px;color:#fff;letter-spacing:-0.781px">Podio</div>
<div class="t" id="q" style="left:760.2px;top:73.00px;font-size:12px;color:#2f6a9c;font-weight:bold;letter-spacing:-1.344px">?</div>
<div class="t" id="seven" style="left:904.0px;top:75.00px;font-size:11px;color:#fff;font-weight:bold;letter-spacing:-0.125px">7</div>
<div class="t" id="nd" style="left:40.8px;top:109.00px;font-size:10px;color:#fff;-webkit-text-stroke:.45px #fff;letter-spacing:-0.207px">New Deliverable</div>
<div class="t" id="mt" style="left:129.6px;top:109.00px;font-size:10px;color:#2c2c2c;letter-spacing:-0.123px">Modify Template</div>
<div class="t" id="act" style="left:220.0px;top:109.00px;font-size:10px;color:#2c2c2c;letter-spacing:-0.200px">Actions</div>
<div class="t" id="bc1" style="left:390.4px;top:109.00px;font-size:10px;color:#2c2c2c;font-weight:bold;letter-spacing:-0.229px">Client Projects</div>
<div class="t" id="bc2" style="left:489.6px;top:109.00px;font-size:10px;color:#2c2c2c;font-weight:bold;letter-spacing:-0.245px">Deliverables</div>
<div class="t" id="bc3" style="left:563.0px;top:109.00px;font-size:10px;color:#2c2c2c;letter-spacing:-0.227px">About Page</div>
<div class="t" id="follow" style="left:768.4px;top:108.00px;font-size:10px;color:#7a7a7a;letter-spacing:-0.134px">Follow</div>
<div class="t" id="three" style="left:801.6px;top:108.00px;font-size:10px;color:#7a7a7a;letter-spacing:0.137px">3</div>
<div class="t" id="like" style="left:846.6px;top:108.00px;font-size:10px;color:#7a7a7a;letter-spacing:-0.240px">Like</div>
<div class="t" id="share" style="left:901.4px;top:107.00px;font-size:10px;color:#7a7a7a;letter-spacing:-0.217px">Share</div>
<div class="t" id="lab0" style="right:802.21px;top:164.00px;font-size:10px;color:#2c2c2c;font-weight:bold;letter-spacing:-0.212px">Deliverable Name</div>
<div class="t" id="lab1" style="right:802.26px;top:209.00px;font-size:10px;color:#2c2c2c;font-weight:bold;letter-spacing:-0.260px">Status</div>
<div class="t" id="lab2" style="right:802.23px;top:261.00px;font-size:10px;color:#2c2c2c;font-weight:bold;letter-spacing:-0.225px">Owner</div>
<div class="t" id="lab3" style="right:802.21px;top:377.00px;font-size:10px;color:#2c2c2c;font-weight:bold;letter-spacing:-0.211px">Deadline</div>
<div class="t" id="lab4" style="right:802.18px;top:430.00px;font-size:10px;color:#2c2c2c;font-weight:bold;letter-spacing:-0.183px">Description</div>
<div class="t" id="lab5" style="right:802.19px;top:474.00px;font-size:10px;color:#2c2c2c;font-weight:bold;letter-spacing:-0.188px">Related Project</div>
<div class="t" id="lab6" style="right:802.26px;top:583.00px;font-size:10px;color:#2c2c2c;font-weight:bold;letter-spacing:-0.259px">Files</div>
<div class="t" id="v1" style="left:233.0px;top:163.00px;font-size:10px;color:#2c2c2c;letter-spacing:-0.227px">About Page</div>
<div class="t" id="s1" style="left:245.6px;top:210.00px;font-size:10px;color:#2c2c2c;letter-spacing:-0.190px">Planning</div>
<div class="t" id="s2" style="left:314.0px;top:210.00px;font-size:10px;color:#b5a02e;letter-spacing:-0.195px">In Progress</div>
<div class="t" id="s3" style="left:394.5px;top:210.00px;font-size:10px;color:#2c2c2c;letter-spacing:-0.166px">Ready for Sign Off</div>
<div class="t" id="s4" style="left:504.5px;top:210.00px;font-size:10px;color:#2c2c2c;letter-spacing:-0.252px">Complete</div>
<div class="t" id="own" style="left:292.6px;top:268.00px;font-size:10px;color:#2c2c2c;font-weight:bold;letter-spacing:-0.196px">Daniel Lacey</div>
<div class="t" id="ar1" style="left:241.4px;top:319.00px;font-size:10px;color:#2c2c2c;letter-spacing:-0.181px">Add/Remove</div>
<div class="t" id="mon" style="left:237.0px;top:369.00px;font-size:8.5px;color:#8a8a8a;letter-spacing:0.151px">Mon</div>
<div class="t" id="d17" style="left:238.8px;top:378.00px;font-size:13.5px;color:#333;-webkit-text-stroke:.4px #333;letter-spacing:-0.616px">17</div>
<div class="t" id="nov" style="left:269.6px;top:377.00px;font-size:10px;color:#2c2c2c;letter-spacing:-0.212px">November 2014</div>
<div class="t" id="desc" style="left:233.0px;top:429.00px;font-size:10px;color:#2c2c2c;letter-spacing:-0.138px">Introduce the vision and product of the Qrafti Team.</div>
<div class="t" id="qal" style="left:293.6px;top:481.00px;font-size:10px;color:#2c2c2c;font-weight:bold;letter-spacing:-0.180px">Qrafti App Launch</div>
<div class="t" id="pin" style="left:293.6px;top:502.00px;font-size:10px;color:#8e8e8e;letter-spacing:-0.162px">Project in <b>Client Projects</b> - 24 days ago</div>
<div class="t" id="ar2" style="left:241.4px;top:532.00px;font-size:10px;color:#2c2c2c;letter-spacing:-0.198px">Add / Remove</div>
<div class="t" id="qw" style="left:293.6px;top:586.00px;font-size:10.5px;color:#2c2c2c;font-weight:bold;letter-spacing:-0.069px">Qrafti website - about page copy</div>
<div class="t" id="att" style="left:293.6px;top:606.00px;font-size:10px;color:#8e8e8e;letter-spacing:-0.172px">Attached by Dominic Chapman, 3 minutes ago</div>
<div class="t" id="caf" style="left:241.4px;top:642.00px;font-size:10px;color:#2c2c2c;letter-spacing:-0.167px">Choose a file</div>
<div class="t" id="actv" style="left:637.6px;top:163.00px;font-size:13px;color:#5795cb;letter-spacing:-0.221px">Activity</div>
<div class="t" id="comm" style="left:699.0px;top:163.00px;font-size:13px;color:#c6c6c6;letter-spacing:-0.307px">Comments</div>
<div class="t" id="n1" style="left:672.6px;top:212.00px;font-size:10px;color:#2c2c2c;font-weight:bold;letter-spacing:-0.205px">Silvia Harmann</div>
<div class="t" id="t1" style="right:95.10px;top:210.00px;font-size:9.2px;color:#c4c4c4;letter-spacing:-0.097px">24 days ago</div>
<div class="t" id="c1" style="left:688.6px;top:229.00px;font-size:9.5px;color:#8a8a8a;font-style:italic;letter-spacing:-0.286px">Created this</div>
<div class="t" id="n2" style="left:672.6px;top:276.00px;font-size:10px;color:#2c2c2c;font-weight:bold;letter-spacing:-0.226px">Dominic Chapman</div>
<div class="t" id="t2" style="right:95.12px;top:275.00px;font-size:9.2px;color:#c4c4c4;letter-spacing:-0.117px">3 minutes ago</div>
<div class="t" id="c2" style="left:688.0px;top:293.00px;font-size:9.5px;color:#8a8a8a;font-style:italic;letter-spacing:-0.294px">Added file <b>Qrafti website - about page copy</b></div>
<div class="t" id="m1" style="left:672.6px;top:319.00px;font-size:10px;color:#2c2c2c;letter-spacing:-0.167px">Hey Daniel, I've made a start on he copy for this</div>
<div class="t" id="m2" style="left:672.6px;top:333.00px;font-size:10px;color:#2c2c2c;letter-spacing:-0.185px">page in the attached Google Doc. Can you take</div>
<div class="t" id="m3" style="left:672.6px;top:347.00px;font-size:10px;color:#2c2c2c;letter-spacing:-0.264px">a look?</div>
<div class="t" id="n3" style="left:672.6px;top:392.00px;font-size:10px;color:#2c2c2c;font-weight:bold;letter-spacing:-0.230px">Daniel Lacey</div>
<div class="t" id="t3" style="right:95.12px;top:391.00px;font-size:9.2px;color:#c4c4c4;letter-spacing:-0.117px">2 minutes ago</div>
<div class="t" id="m4" style="left:672.6px;top:410.00px;font-size:10px;color:#2c2c2c;letter-spacing:-0.171px">Looks good, thanks. I've just got a few changes to</div>
<div class="t" id="m5" style="left:672.6px;top:424.00px;font-size:10px;color:#2c2c2c;letter-spacing:-0.177px">make so I can take it from here.</div>
<div class="t" id="addc" style="left:645.4px;top:567.00px;font-size:10px;color:#a9a9a9;letter-spacing:-0.188px">Add a comment</div>
</body>
</html>
